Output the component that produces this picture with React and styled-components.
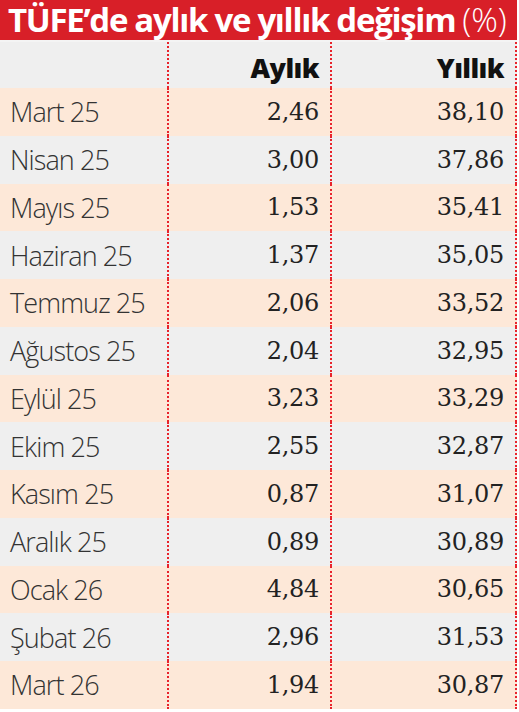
import React from "react";
import styled, { createGlobalStyle } from "styled-components";

const Global = createGlobalStyle`
  html, body { margin: 0; padding: 0; background: #ffffff; }
  body { width: 519px; height: 712px; overflow: hidden; }
`;

const Frame = styled.div`
  width: 517px;
  display: flex;
  flex-direction: column;
`;

const Title = styled.div`
  height: 40px;
  background: #d81f28;
  color: #ffffff;
  display: flex;
  align-items: center;
  padding-left: 8px;
  border-bottom: 2px solid #f4f4f4;
  font-family: "Open Sans", sans-serif;
  font-size: 33px;
  line-height: 40px;
  font-weight: 700;
  letter-spacing: -1.3px;
  white-space: nowrap;
`;

const Light = styled.span`
  font-weight: 300;
  margin-left: 7px;
  letter-spacing: 0;
`;

const Row = styled.div`
  display: grid;
  grid-template-columns: 169px 163px 185px;
  height: ${(p) => p.$h || 47.75}px;
  background: ${(p) => (p.$peach ? "#fde8d8" : "#efefef")};
`;

const Cell = styled.div`
  display: flex;
  align-items: center;
  justify-content: ${(p) => (p.$left ? "flex-start" : "flex-end")};
  padding: ${(p) => (p.$left ? "0 0 0 10px" : "0 11px 0 0")};
  border-right: 2px dotted #e8232b;
  box-sizing: border-box;
  color: #2a2a2a;
`;

const Label = styled.span`
  font-family: "Open Sans", sans-serif;
  font-weight: 300;
  font-size: 27px;
  letter-spacing: -0.9px;
  color: #333;
`;

const Num = styled.span`
  font-family: "DejaVu Serif", serif;
  font-size: 24px;
  color: #222;
  letter-spacing: -0.3px;
`;

const Head = styled.span`
  font-family: "Open Sans", sans-serif;
  font-weight: 800;
  font-size: 27px;
  letter-spacing: -0.6px;
  color: #111;
  padding-top: 4px;
`;

const data = [
  ["Mart 25", "2,46", "38,10"],
  ["Nisan 25", "3,00", "37,86"],
  ["Mayıs 25", "1,53", "35,41"],
  ["Haziran 25", "1,37", "35,05"],
  ["Temmuz 25", "2,06", "33,52"],
  ["Ağustos 25", "2,04", "32,95"],
  ["Eylül 25", "3,23", "33,29"],
  ["Ekim 25", "2,55", "32,87"],
  ["Kasım 25", "0,87", "31,07"],
  ["Aralık 25", "0,89", "30,89"],
  ["Ocak 26", "4,84", "30,65"],
  ["Şubat 26", "2,96", "31,53"],
  ["Mart 26", "1,94", "30,87"],
];

export default function App() {
  return (
    <Frame>
      <Global />
      <Title>
        TÜFE’de aylık ve yıllık değişim<Light>(%)</Light>
      </Title>
      <Row $h={46}>
        <Cell $left />
        <Cell><Head>Aylık</Head></Cell>
        <Cell><Head>Yıllık</Head></Cell>
      </Row>
      {data.map(([l, a, y], i) => (
        <Row key={l} $peach={i % 2 === 0}>
          <Cell $left><Label>{l}</Label></Cell>
          <Cell><Num>{a}</Num></Cell>
          <Cell><Num>{y}</Num></Cell>
        </Row>
      ))}
    </Frame>
  );
}
